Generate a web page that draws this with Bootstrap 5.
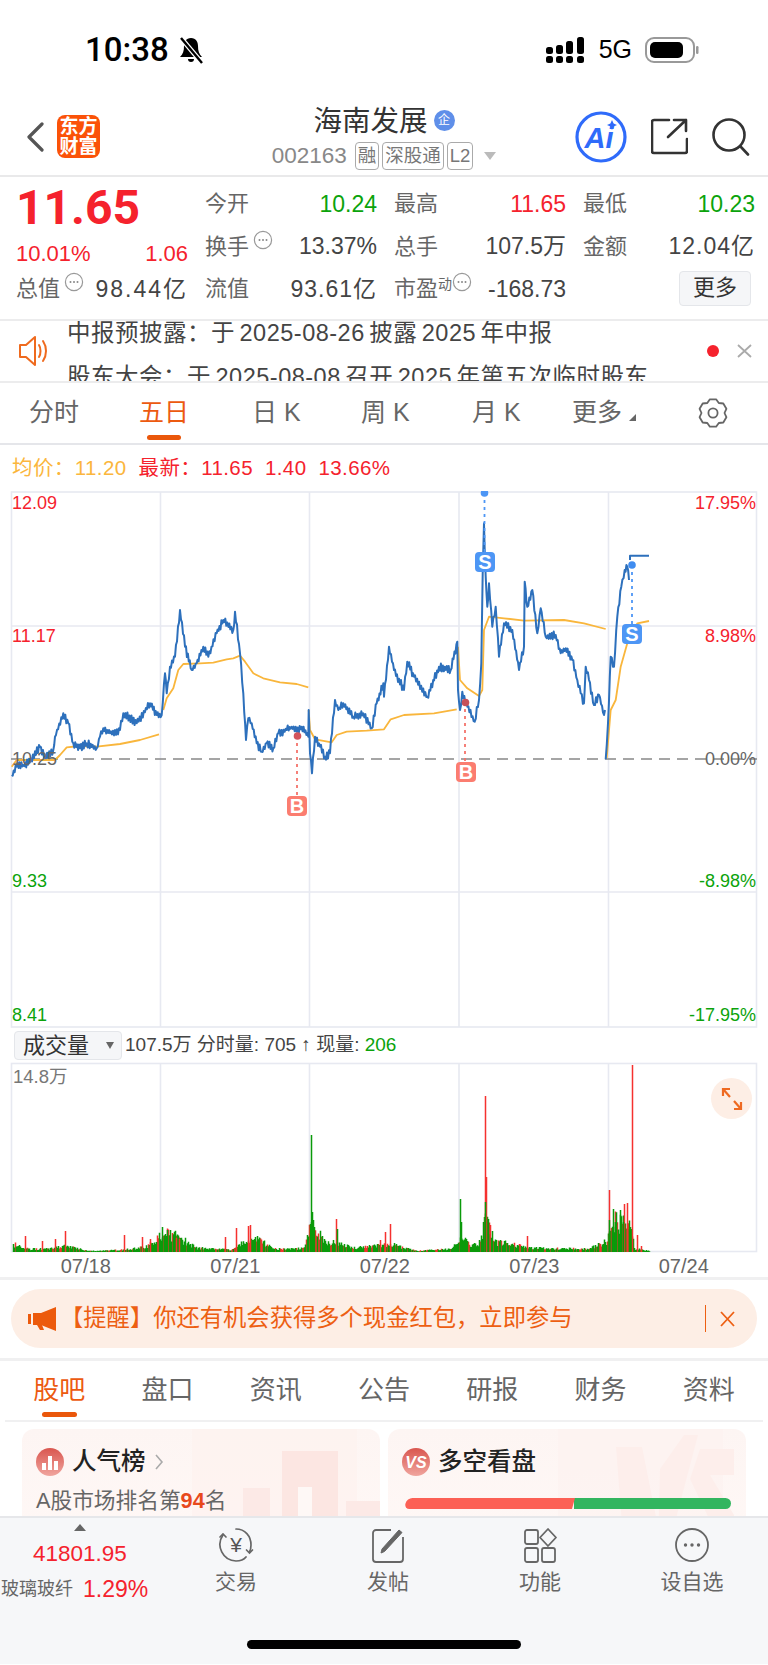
<!DOCTYPE html>
<html lang="zh">
<head>
    <meta charset="UTF-8">
    <title>海南发展 002163</title>
    <link href="https://cdn.jsdelivr.net/npm/bootstrap@5.3.0/dist/css/bootstrap.min.css" rel="stylesheet">
    <style>
        body {
            font-family: "Liberation Sans", "Noto Sans CJK SC", sans-serif;
            background: #fff;
            color: #444;
            margin: 0;
        }
        .phone { width: 768px; height: 1665px; overflow: hidden; }
        .up { color: #f5222d; }
        .down { color: #0ba30b; }
        .muted { color: #666; }

        /* status bar */
        .status-bar { height: 100px; padding: 0 68px 0 85px; color: #000; }
        .clock { font-family: Roboto, "Liberation Sans", sans-serif; font-size: 33px; font-weight: 500; margin-right: 9px; }
        .net { font-size: 25px; margin: 0 13px; }

        /* stock header */
        .stock-head { height: 77px; border-bottom: 2px solid #e9e9ea; padding: 0 18px 2px; }
        .head-side { flex: 1 1 0; }
        .back-arrow { margin-left: 8px; }
        .logo-box {
            width: 43px; height: 43px; border-radius: 8px; background: #fb5208; color: #fff;
            font-size: 19px; line-height: 20px; font-weight: 700; text-align: center; margin-left: 13px; padding-top: 2px;
        }
        .stock-name { font-size: 28.5px; line-height: 34px; color: #333; }
        .corp-mark {
            width: 21px; height: 21px; border-radius: 50%; background: #5f8fe9; color: #fff;
            font-size: 12px; line-height: 21px; text-align: center; margin-left: 6px;
        }
        .stock-code { font-size: 22.5px; color: #888; line-height: 28px; margin-right: 8px; }
        .code-tag {
            border: 1px solid #aaa; border-radius: 4px; font-size: 18.5px; line-height: 26px; color: #777;
            padding: 0 2px; margin-right: 3px;
        }
        .tri-down { width: 0; height: 0; border: 6px solid transparent; border-top: 8px solid #bbb; border-bottom: 0; margin-left: 8px; }

        /* quote block */
        .quote-grid {
            display: grid; grid-template-columns: repeat(4, 172px); column-gap: 17px; grid-auto-rows: 42.5px;
            height: 144px; padding: 5.5px 0 0 16px; font-size: 23px; border-bottom: 2px solid #ececed;
        }
        .quote-grid .muted { font-size: 22px; }
        .price { font-family: Roboto, "Liberation Sans", sans-serif; font-size: 48px; font-weight: 700; line-height: 43px; margin-top: 3px; }
        .low-cell { padding-top: 14px; font-size: 22px; }
        .val-wide { letter-spacing: 1px; }
        .val-wider { letter-spacing: 2px; }
        .more-btn {
            width: 72px; height: 35px; margin: 3px 4px 0 0; font-size: 22px; line-height: 32px; padding: 0; color: #333;
            background: #f5f6f8; border: 1px solid #e4e6ea; border-radius: 4px;
        }

        /* scrolling notice */
        .notice { height: 62px; overflow: hidden; border-bottom: 2px solid #ececed; padding: 0 16px 0 18px; }
        .notice-text { font-size: 23.5px; line-height: 44px; letter-spacing: .5px; word-spacing: -2.5px; color: #444; margin: -10px 0 0 19px; white-space: nowrap; }
        .red-dot { width: 12px; height: 12px; border-radius: 50%; background: #f5222d; margin-right: 18px; }

        /* chart tabs */
        .chart-tabs {
            display: grid; grid-template-columns: 110px 113px 109px 111px 100px 126px auto; align-items: center;
            height: 62px; padding-left: 29px; border-bottom: 2px solid #e5e6ea; font-size: 25px; color: #666;
        }
        .tab-on { color: #ec5a10; position: relative; }
        .chart-tabs .tab-on { width: 50px; }
        .tab-on::after {
            content: ""; position: absolute; left: 8px; right: 8px; bottom: -8px; height: 5px;
            border-radius: 3px; background: #ea570b;
        }
        .corner-tri { display: inline-block; width: 0; height: 0; border-left: 7px solid transparent; border-bottom: 7px solid #666; margin-left: 7px; }

        .avg-line { height: 46px; padding-left: 12px; font-size: 20.5px; letter-spacing: .4px; color: #f5222d; white-space: nowrap; }
        .avg-line > span { margin-right: 12px; }
        .avg-tone { color: #fbb63d; }
        svg { display: block; }
        .chart-svg text { font-family: "Liberation Sans", "Noto Sans CJK SC", sans-serif; }

        /* volume */
        .vol-bar { height: 33px; padding-left: 14px; font-size: 19px; color: #444; white-space: nowrap; }
        .vol-pick {
            width: 108px; height: 29px; background: #f5f6f8; border: 1px solid #e4e6ea; border-radius: 4px;
            font-size: 22px; line-height: 27px; padding-left: 8px; margin-right: 3px; color: #333;
        }
        .vol-tri { width: 0; height: 0; border: 4px solid transparent; border-top: 7px solid #666; border-bottom: 0; margin: 0 7px 0 auto; }
        .vol-box { height: 192px; }
        .expand-btn {
            position: absolute; right: 16px; top: 16px; width: 41px; height: 41px; border-radius: 50%; background: #fdeee5;
        }
        .date-row { height: 26px; padding-left: 11px; font-size: 20px; color: #666; border-bottom: 3px solid #f0f0f1; }
        .date-row span { width: 149.5px; text-align: center; }

        /* promo */
        .promo-wrap { padding: 9px 11px 0; border-bottom: 3px solid #f0f0f1; box-sizing: content-box; height: 69px; }
        .promo {
            height: 59px; border-radius: 30px; background: #fdeee5; color: #ed5f12; font-size: 23.300px;
            padding: 0 22px 0 17px; white-space: nowrap;
        }
        .promo-rule { width: 1px; height: 27px; background: #ed5f12; margin: 0 14px 0 auto; }

        /* lower tabs */
        .info-tabs { height: 61px; margin: 0 5px; border-bottom: 2px solid #f0f0f1; font-size: 26px; color: #666; }
        .info-tabs > div { flex: 1 1 0; text-align: center; line-height: 58px; }
        .info-tabs .tab-on::after { left: 37px; right: 36px; bottom: 3px; }

        .panel-row { height: 94px; padding: 7px 22px 0; overflow: hidden; gap: 8px; }
        .panel {
            width: 358px; height: 120px; border-radius: 12px 12px 0 0; overflow: hidden; position: relative;
            background: linear-gradient(#fdf5f3, #fff8f6);
        }
        .panel-mark { position: absolute; left: 0; top: 0; }
        .panel-body { position: relative; padding: 19px 14px 0; }
        .panel-title { font-size: 24.5px; line-height: 28px; font-weight: 500; color: #222; margin-left: 8px; }
        .rank-text { font-size: 21.700px; color: #666; line-height: 30px; margin-top: 10px; white-space: nowrap; }
        .rank-text b { color: #e8491c; }
        .split-bar { height: 11px; margin: 22px 1px 0 2px; position: relative; }
        .split-red { width: 168px; background: #fc6055; border-radius: 6px 0 0 6px; transform: skewX(-15deg); transform-origin: bottom left; }
        .split-green { background: #33b55f; border-radius: 0 6px 6px 0; margin-left: 2px; flex: 1; }

        /* bottom bar */
        .foot-bar { height: 148px; background: #f6f7f9; border-top: 2px solid #e6e7ea; position: relative; }
        .index-cell { width: 160px; white-space: nowrap; }
        .index-tri { width: 0; height: 0; margin: 6px 0 0 74px; border: 6px solid transparent; border-bottom: 7px solid #666; border-top: 0; }
        .index-num { font-size: 22.5px; line-height: 24px; margin: 11px 0 0 33px; }
        .index-sub { margin-top: 6px; padding-left: 1px; }
        .index-name { font-size: 18px; color: #666; margin-right: 10px; }
        .index-pct { font-size: 23px; }
        .foot-cell { width: 152px; color: #666; font-size: 21px; line-height: 28px; padding-top: 9px; }
        .foot-cell svg { margin-bottom: 5px; }
        .home-pill {
            position: absolute; left: 247px; bottom: 15px; width: 274px; height: 9px; border-radius: 5px; background: #000;
        }
    </style>
</head>
<body>
<div class="phone d-flex flex-column">

    <div class="status-bar d-flex align-items-center flex-shrink-0">
        <span class="clock">10:38</span>
        <svg width="26" height="30" viewBox="0 0 26 30">
            <path d="M13 3c-5 0-7 4-7 8 0 5-1 8-4 11h22c-3-3-4-6-4-11 0-4-2-8-7-8z" fill="#000"/>
            <path d="M10 24h6a3 3 0 0 1-6 0z" fill="#000"/>
            <path d="M3 3l21 25" stroke="#fff" stroke-width="5"/>
            <path d="M3 3l21 25" stroke="#000" stroke-width="2.4"/>
        </svg>
        <span class="ms-auto d-flex align-items-center">
            <svg width="41" height="28" viewBox="0 0 41 28" fill="#000">
                <rect x="1" y="11" width="7" height="7" rx="2.5"/><rect x="1" y="20" width="7" height="7" rx="2.5"/>
                <rect x="11" y="9" width="7" height="9" rx="2.5"/><rect x="11" y="20" width="7" height="7" rx="2.5"/>
                <rect x="21" y="5" width="7" height="13" rx="2.5"/><rect x="21" y="20" width="7" height="7" rx="2.5"/>
                <rect x="32" y="1" width="7" height="17" rx="2.5"/><rect x="32" y="20" width="7" height="7" rx="2.5"/>
            </svg>
            <span class="net">5G</span>
            <svg width="55" height="28" viewBox="0 0 55 28">
                <rect x="1" y="2" width="48" height="24" rx="8" fill="none" stroke="#999" stroke-width="2"/>
                <rect x="5" y="6" width="33" height="16" rx="5" fill="#000"/>
                <rect x="51" y="10" width="2.5" height="8" rx="1.2" fill="#999"/>
            </svg>
        </span>
    </div>

    <div class="stock-head d-flex align-items-center flex-shrink-0">
        <div class="head-side d-flex align-items-center">
            <svg class="back-arrow" width="18" height="30" viewBox="0 0 18 30"><path d="M16 2L3 15l13 13" fill="none" stroke="#555" stroke-width="3.2" stroke-linecap="round" stroke-linejoin="round"/></svg>
            <div class="logo-box">东方<br>财富</div>
        </div>
        <div class="text-center">
            <div class="d-flex align-items-center justify-content-center"><span class="stock-name">海南发展</span><span class="corp-mark">企</span></div>
            <div class="d-flex align-items-center justify-content-center mt-1">
                <span class="stock-code">002163</span><span class="code-tag">融</span><span class="code-tag">深股通</span><span class="code-tag">L2</span><span class="tri-down"></span>
            </div>
        </div>
        <div class="head-side d-flex align-items-center justify-content-end">
            <svg class="chart-svg" width="52" height="52" viewBox="0 0 52 52">
                <circle cx="26" cy="26" r="24" fill="none" stroke="#2f6bfa" stroke-width="3.2"/>
                <text x="24" y="37" text-anchor="middle" font-size="29" font-weight="700" font-style="italic" fill="#2f6bfa">Ai</text>
                <path d="M37 9l1.6 3.4L42 14l-3.4 1.6L37 19l-1.6-3.4L32 14l3.4-1.6z" fill="#2f6bfa"/>
            </svg>
            <svg class="ms-4" width="37" height="37" viewBox="0 0 37 37" fill="none" stroke="#333" stroke-width="2.6" stroke-linecap="round" stroke-linejoin="round">
                <path d="M18 2H3a2 2 0 0 0-2 2v29a2 2 0 0 0 2 2h31a2 2 0 0 0 2-2V21"/>
                <path d="M17 19L35 2M23 2h12v11"/>
            </svg>
            <svg class="ms-4" width="38" height="38" viewBox="0 0 38 38" fill="none" stroke="#333" stroke-width="2.6" stroke-linecap="round">
                <circle cx="17" cy="17" r="15.5"/><path d="M28.5 28.5L36 36.5"/>
            </svg>
        </div>
    </div>

    <svg width="0" height="0" class="position-absolute">
        <symbol id="dots" viewBox="0 0 20 20">
            <circle cx="10" cy="10" r="8.6" fill="none" stroke="#999" stroke-width="1.2"/>
            <circle cx="6.5" cy="10" r="1" fill="#888"/><circle cx="10" cy="10" r="1" fill="#888"/><circle cx="13.5" cy="10" r="1" fill="#888"/>
        </symbol>
    </svg>

    <div class="quote-grid flex-shrink-0">
        <div class="price up">11.65</div>
        <div class="d-flex justify-content-between align-items-center"><span class="muted">今开</span><span class="down">10.24</span></div>
        <div class="d-flex justify-content-between align-items-center"><span class="muted">最高</span><span class="up">11.65</span></div>
        <div class="d-flex justify-content-between align-items-center"><span class="muted">最低</span><span class="down">10.23</span></div>

        <div class="d-flex justify-content-between align-items-center low-cell up"><span>10.01%</span><span>1.06</span></div>
        <div class="d-flex justify-content-between align-items-center"><span class="muted">换手<svg class="d-inline-block align-top ms-1" width="20" height="20"><use href="#dots"/></svg></span><span>13.37%</span></div>
        <div class="d-flex justify-content-between align-items-center"><span class="muted">总手</span><span>107.5万</span></div>
        <div class="d-flex justify-content-between align-items-center"><span class="muted">金额</span><span class="val-wide">12.04亿</span></div>

        <div class="d-flex justify-content-between align-items-center"><span class="muted">总值<svg class="d-inline-block align-top ms-1" width="20" height="20"><use href="#dots"/></svg></span><span class="val-wider">98.44亿</span></div>
        <div class="d-flex justify-content-between align-items-center"><span class="muted">流值</span><span class="val-wide">93.61亿</span></div>
        <div class="d-flex justify-content-between align-items-center"><span class="muted text-nowrap">市盈<sup style="font-size:14px">动</sup><svg class="d-inline-block align-top" width="20" height="20"><use href="#dots"/></svg></span><span>-168.73</span></div>
        <div class="d-flex justify-content-end align-items-start"><button class="btn more-btn">更多</button></div>
    </div>

    <div class="notice d-flex align-items-center flex-shrink-0">
        <svg class="flex-shrink-0" width="30" height="34" viewBox="0 0 30 34" fill="none" stroke="#ef6a1e" stroke-width="2" stroke-linejoin="round" stroke-linecap="round">
            <path d="M2 11h6l9-8v28l-9-8H2z"/><path d="M21 11c2 3 2 9 0 12M25 7c4 6 4 14 0 20"/>
        </svg>
        <div class="notice-text flex-grow-1 align-self-start">
            <div>中报预披露：于 2025-08-26 披露 2025 年中报</div>
            <div>股东大会：于 2025-08-08 召开 2025 年第五次临时股东</div>
        </div>
        <span class="red-dot flex-shrink-0"></span>
        <svg class="flex-shrink-0" width="15" height="14" viewBox="0 0 15 14"><path d="M1 1l13 12M14 1L1 13" stroke="#aaa" stroke-width="1.800"/></svg>
    </div>

    <div class="chart-tabs flex-shrink-0">
        <span>分时</span>
        <span class="tab-on">五日</span>
        <span>日 K</span>
        <span>周 K</span>
        <span>月 K</span>
        <span>更多<i class="corner-tri"></i></span>
        <svg id="gear" width="30" height="30" viewBox="0 0 30 30" fill="none" stroke="#666" stroke-width="1.8" stroke-linejoin="round"><path id="gearPath"/><circle cx="15" cy="15" r="4.6"/></svg>
    </div>

    <div class="avg-line d-flex align-items-center flex-shrink-0">
        <span class="avg-tone">均价：11.20</span>
        <span>最新：11.65</span>
        <span>1.40</span>
        <span>13.66%</span>
    </div>

    <svg id="priceChart" class="chart-svg flex-shrink-0" width="768" height="538" viewBox="0 491 768 538">
        <g fill="none" stroke="#e7e9f1" stroke-width="1.6">
            <rect x="11.5" y="492" width="745" height="535"/>
            <path d="M160.5 492V1027M309.5 492V1027M459 492V1027M608.5 492V1027M11 626H757M11 892H757"/>
        </g>
        <path d="M11 759H757" stroke="#888" stroke-width="1.6" stroke-dasharray="11 7"/>
        <g id="priceLines"></g>
        <g font-size="18">
            <text x="12" y="509" fill="#f5222d">12.09</text>
            <text x="12" y="642" fill="#f5222d">11.17</text>
            <text x="12" y="765" fill="#666">10.25</text>
            <text x="12" y="887" fill="#0ba30b">9.33</text>
            <text x="12" y="1021" fill="#0ba30b">8.41</text>
            <text x="756" y="509" text-anchor="end" fill="#f5222d">17.95%</text>
            <text x="756" y="642" text-anchor="end" fill="#f5222d">8.98%</text>
            <text x="756" y="765" text-anchor="end" fill="#666">0.00%</text>
            <text x="756" y="887" text-anchor="end" fill="#0ba30b">-8.98%</text>
            <text x="756" y="1021" text-anchor="end" fill="#0ba30b">-17.95%</text>
        </g>
        <g stroke-width="1.8" stroke-dasharray="3 4" fill="none">
            <path d="M297 736V796M465 702V762" stroke="#f4736b"/>
            <path d="M484.500 493V552M632 565V624" stroke="#4d96f5"/>
        </g>
        <circle cx="297.500" cy="736" r="3.800" fill="#d2545c"/>
        <circle cx="465.500" cy="702.500" r="3.800" fill="#c6505a"/>
        <circle cx="484.500" cy="493" r="3.800" fill="#4d96f5"/>
        <circle cx="632" cy="565" r="3.800" fill="#3f8cf0"/>
        <g font-size="20" font-weight="700" text-anchor="middle" fill="#fff">
            <rect x="287" y="796" width="20" height="20" rx="4" fill="#fb7d70"/><text x="297" y="813">B</text>
            <rect x="456" y="762" width="20" height="20" rx="4" fill="#fb7d70"/><text x="466" y="779">B</text>
            <rect x="475" y="552" width="20" height="20" rx="4" fill="#4d96f5"/><text x="485" y="569">S</text>
            <rect x="622" y="624" width="20" height="20" rx="4" fill="#4d96f5"/><text x="632" y="641">S</text>
        </g>
    </svg>

    <div class="vol-bar d-flex align-items-center flex-shrink-0">
        <div class="vol-pick d-flex align-items-center">成交量<i class="vol-tri"></i></div>
        <span>107.5万 分时量: 705 ↑ 现量:&nbsp;<span class="down">206</span></span>
    </div>

    <div class="vol-box position-relative flex-shrink-0">
        <svg id="volChart" class="chart-svg" width="768" height="192" viewBox="0 1062 768 192">
            <g fill="none" stroke="#e7e9f1" stroke-width="1.6">
                <rect x="11.5" y="1063.500" width="745" height="188"/>
                <path d="M160.500 1064V1252M309.500 1064V1252M459 1064V1252M608.500 1064V1252"/>
            </g>
            <g id="volBars" stroke-width="1.500"></g>
            <text x="13" y="1083" font-size="18.500" fill="#777">14.8万</text>
        </svg>
        <div class="expand-btn d-flex align-items-center justify-content-center">
            <svg width="22" height="24" viewBox="0 0 22 24" fill="none" stroke="#ee6a22" stroke-width="2.200">
                <path d="M2 9V2h7M2 2l7 8M20 15v7h-7M20 22l-7-8"/>
            </svg>
        </div>
    </div>

    <div class="date-row d-flex align-items-center flex-shrink-0">
        <span>07/18</span><span>07/21</span><span>07/22</span><span>07/23</span><span>07/24</span>
    </div>

    <div class="promo-wrap flex-shrink-0">
        <div class="promo d-flex align-items-center">
            <svg width="28" height="26" viewBox="0 0 28 26" fill="#ec5a0c" class="me-1 flex-shrink-0">
                <rect x="0" y="8" width="3" height="10"/><path d="M5 7h8L28 1v24L13 19H5z"/><path d="M9 19h5l2 5h-4z" fill="#ec5a0c"/>
            </svg>
            <span>【提醒】你还有机会获得多个现金红包，立即参与</span>
            <span class="promo-rule"></span>
            <svg class="flex-shrink-0" width="15" height="16" viewBox="0 0 15 16"><path d="M1 1l13 14M14 1L1 15" stroke="#ed5f12" stroke-width="1.800"/></svg>
        </div>
    </div>

    <div class="info-tabs d-flex flex-shrink-0">
        <div class="tab-on">股吧</div><div>盘口</div><div>资讯</div><div>公告</div><div>研报</div><div>财务</div><div>资料</div>
    </div>

    <div class="panel-row d-flex flex-shrink-0">
        <div class="panel">
            <svg class="panel-mark" width="358" height="120" viewBox="0 0 358 120">
                <rect x="170" y="0" width="165" height="120" fill="#fdf0ed" opacity=".55"/>
                <rect x="221" y="59" width="27" height="61" fill="#fce9e6"/>
                <rect x="260" y="22" width="56" height="98" fill="#fce6e2"/>
                <path d="M276 58h14v62h-14z" fill="#fff" opacity=".7"/>
                <rect x="324" y="72" width="34" height="48" fill="#fce9e6"/>
            </svg>
            <div class="panel-body">
                <div class="d-flex align-items-center">
                    <svg width="28" height="28" viewBox="0 0 28 28">
                        <defs><linearGradient id="redBall" x1="0" y1="0" x2="0" y2="1"><stop offset="0" stop-color="#d9564f"/><stop offset="1" stop-color="#f0a59e"/></linearGradient></defs>
                        <circle cx="14" cy="14" r="14" fill="url(#redBall)"/>
                        <path d="M6 15h4v7H6zM12 8h4v14h-4zM18 13h4v9h-4z" fill="#fff"/>
                    </svg>
                    <span class="panel-title">人气榜</span>
                    <svg class="ms-2" width="10" height="18" viewBox="0 0 10 18"><path d="M2 2l6 7-6 7" fill="none" stroke="#aaa" stroke-width="1.600"/></svg>
                </div>
                <div class="rank-text">A股市场排名第<b>94</b>名</div>
            </div>
        </div>
        <div class="panel">
            <svg class="panel-mark" width="358" height="120" viewBox="0 0 358 120">
                <rect x="170" y="0" width="165" height="120" fill="#fdf0ed" opacity=".4"/>
                <path d="M228 18h26l14 70 -14 32h-18z" fill="#fdeeeb"/>
                <path d="M272 40l24-34h14l-30 114h-10z" fill="#fdeeeb"/>
                <path d="M312 20h34v26h-24l24 40v34h-40l8-24h10l-22-46z" fill="#fdeeeb"/>
            </svg>
            <div class="panel-body">
                <div class="d-flex align-items-center">
                    <svg class="chart-svg" width="28" height="28" viewBox="0 0 28 28">
                        <circle cx="14" cy="14" r="14" fill="url(#redBall)"/>
                        <text x="14" y="20" text-anchor="middle" font-size="16" font-weight="700" font-style="italic" fill="#fff">VS</text>
                    </svg>
                    <span class="panel-title">多空看盘</span>
                </div>
                <div class="split-bar d-flex">
                    <div class="split-red"></div><div class="split-green"></div>
                </div>
            </div>
        </div>
    </div>

    <div class="foot-bar d-flex flex-shrink-0">
        <div class="index-cell">
            <div class="index-tri"></div>
            <div class="index-num up">41801.95</div>
            <div class="index-sub d-flex align-items-center"><span class="index-name">玻璃玻纤</span><span class="index-pct up">1.29%</span></div>
        </div>
        <div class="foot-cell d-flex flex-column align-items-center">
            <svg class="chart-svg" width="38" height="36" viewBox="0 0 38 36" fill="none" stroke="#666" stroke-width="1.700" stroke-linecap="round">
                <path d="M6 8A16.500 16.500 0 0 0 19 34c4 0 8-1.500 10-4"/>
                <path d="M19 2c9 0 15 7 15 16 0 3-.5 5-1.500 7"/>
                <path d="M3 10l3-3 3 3M29.500 23l3 3 3-3"/>
                <text x="19" y="25" text-anchor="middle" font-size="21" stroke="none" fill="#555">¥</text>
            </svg>
            <span>交易</span>
        </div>
        <div class="foot-cell d-flex flex-column align-items-center">
            <svg width="34" height="36" viewBox="0 0 34 36" fill="none" stroke="#666" stroke-width="1.800" stroke-linejoin="round">
                <path d="M20 3H5a3 3 0 0 0-3 3v26a3 3 0 0 0 3 3h24a3 3 0 0 0 3-3V10"/>
                <path d="M11 22L28 3l3 2.500L13.500 24.500 10 26z" fill="#666" stroke-width="1"/>
            </svg>
            <span>发帖</span>
        </div>
        <div class="foot-cell d-flex flex-column align-items-center">
            <svg width="34" height="36" viewBox="0 0 34 36" fill="none" stroke="#666" stroke-width="1.800" stroke-linejoin="round">
                <rect x="2" y="3" width="13" height="14" rx="2"/><path d="M25 2l8 8.500-8 8.500-8-8.500z"/>
                <rect x="2" y="21" width="13" height="14" rx="2"/><rect x="19" y="21" width="13" height="14" rx="2"/>
            </svg>
            <span>功能</span>
        </div>
        <div class="foot-cell d-flex flex-column align-items-center">
            <svg width="36" height="36" viewBox="0 0 36 36">
                <circle cx="18" cy="18" r="16" fill="none" stroke="#666" stroke-width="1.800"/>
                <circle cx="11.500" cy="18" r="1.700" fill="#666"/><circle cx="18" cy="18" r="1.700" fill="#666"/><circle cx="24.500" cy="18" r="1.700" fill="#666"/>
            </svg>
            <span>设自选</span>
        </div>
        <div class="home-pill"></div>
    </div>
</div>

<script src="https://cdn.jsdelivr.net/npm/bootstrap@5.3.0/dist/js/bootstrap.bundle.min.js"></script>
<script>
    // repeatable noise so the lines come out the same each load
    let seed = 20250723;
    function rnd() {
        seed = (seed * 1664525 + 1013904223) % 4294967296;
        return seed / 4294967296;
    }

    // traced from the screenshot at 3x, left half then right half
    const toL = p => [p[0] / 3, 390 + p[1] / 3];
    const toR = p => [384 + p[0] / 3, 390 + p[1] / 3];

    const blue = [
        ...[[35,1155],[50,1130],[70,1125],[90,1115],[120,1070],[135,1100],[160,1080],[165,1040],[190,970],[205,1000],[220,1060],[240,1075],[260,1060],[290,1075],[300,1040],[310,1015],[330,1030],[360,1020],[370,970],[410,1000],[450,940],[470,975],[485,975],[495,850],[500,910],[510,830],[525,800],[540,660],[555,770],[575,840],[590,820],[610,770],[625,800],[650,730],[670,690],[700,720],[705,665],[720,790],[730,910],[738,1050],[745,985],[755,1000],[770,1060],[785,1085],[800,1060],[820,1075],[835,1030],[860,1020],[875,1010],[890,1025],[905,1010],[925,1040],[926,960],[930,1090],[936,1150],[945,1040],[960,1070],[975,1100],[990,1090],[1005,930],[1015,960],[1030,940],[1060,980],[1090,970],[1115,1015],[1130,940],[1150,880]].map(toL),
        ...[[0,920],[15,770],[30,840],[60,900],[70,815],[90,860],[130,920],[165,830],[200,840],[220,755],[222,900],[228,960],[235,905],[250,950],[272,995],[285,930],[292,820],[296,550],[300,400],[302,480],[305,560],[310,650],[315,580],[325,710],[335,650],[345,800],[360,700],[385,720],[405,840],[420,770],[422,575],[430,650],[445,600],[460,730],[470,655],[485,740],[515,735],[530,790],[545,775],[565,810],[580,870],[590,910],[600,940],[605,830],[615,870],[630,945],[645,915],[660,975],[663,960]].map(toR)
    ];
    const blueEnd = [[665,1108],[672,1000],[680,800],[690,830],[700,680],[712,590],[722,540],[730,530],[735,570]].map(toR);
    const blueFlat = [[738,510],[738,497],[795,497]].map(toR);

    const yellow = [
        [[35,1130],[50,1110],[100,1110],[165,1110],[180,1095],[200,1072],[240,1068],[290,1070],[360,1062],[420,1050],[477,1033]].map(toL),
        [[490,960],[500,925],[520,895],[535,840],[550,822],[600,820],[640,818],[680,808],[700,805],[720,797],[735,815],[760,850],[790,865],[840,877],[890,882],[925,892]].map(toL),
        [[926,960],[930,1020],[945,1048],[995,1057],[1010,1035],[1040,1025],[1100,1022],[1152,1018]].map(toL).concat([[20,988],[60,975],[150,970],[218,958]].map(toR)),
        [[222,770],[228,870],[250,895],[285,918],[295,900],[300,720],[315,680],[360,685],[420,692],[540,690],[600,700],[665,717]].map(toR),
        [[668,1105],[680,960],[695,930],[710,830],[730,760],[760,700],[795,693]].map(toR)
    ];

    // price ticks: saw-tooth wobble laid over the traced outline
    function rough(pts, amt) {
        const out = [];
        let flip = 1;
        for (let i = 0; i < pts.length - 1; i++) {
            const a = pts[i], b = pts[i + 1];
            const n = Math.max(1, Math.round(Math.abs(b[0] - a[0])));
            for (let k = 0; k < n; k++) {
                const t = k / n;
                flip = -flip;
                out.push([a[0] + (b[0] - a[0]) * t, a[1] + (b[1] - a[1]) * t + (k ? flip * (1 + rnd() * amt) : 0)]);
            }
        }
        out.push(pts[pts.length - 1]);
        return out;
    }
    const d = pts => 'M' + pts.map(p => p[0].toFixed(1) + ' ' + p[1].toFixed(1)).join('L');

    let lines = '';
    yellow.forEach(seg => {
        lines += `<path d="${d(seg)}" fill="none" stroke="#f9b63c" stroke-width="1.8" stroke-linejoin="round"/>`;
    });
    [rough(blue, 3), rough(blueEnd, 2.5), blueFlat].forEach(seg => {
        lines += `<path d="${d(seg)}" fill="none" stroke="#2d70bc" stroke-width="2" stroke-linejoin="round"/>`;
    });
    document.getElementById('priceLines').innerHTML = lines;

    // volume bars: [zoom x, height] envelope, then the tall spikes
    const env = [[25,8],[50,3],[100,3],[130,6],[180,1],[250,2],[300,5],[330,18],[360,15],[400,4],[470,2],[490,8],[525,12],[560,3],[620,4],[635,30],[660,10],[690,8],[720,4],[800,7],[850,1],[920,3],[935,12],[950,10],[975,5],[990,30],[1010,10],[1080,4],[1200,3],[1235,10],[1250,30],[1285,25],[1295,3],[1325,1]];
    function envAt(x) {
        for (let i = 0; i < env.length - 1; i++) {
            if (x >= env[i][0] && x <= env[i + 1][0]) {
                const t = (x - env[i][0]) / (env[i + 1][0] - env[i][0]);
                return env[i][1] + (env[i + 1][1] - env[i][1]) * t;
            }
        }
        return 0;
    }
    const base = 1252;
    let red = '', green = '';
    for (let x = 12; x < 650; x++) {
        const h = envAt(x * 2.04) * (.6 + rnd() * .8);
        if (h < .3) continue;
        const seg = `M${x + .5} ${base}V${(base - h).toFixed(1)}`;
        if (rnd() < .25) red += seg; else green += seg;
    }
    const redSpikes = [[25,16],[42,11],[55,13],[65,21],[124,17],[142,15],[150,13],[176,14],[179,13],[225,15],[236,24],[248,26],[250,27],[336,33],[380,12],[385,20],[390,28],[485,156],[486,75],[527,16],[609,62],[624,48],[627,49],[632,187],[637,17],[641,6]];
    const greenSpikes = [[162,25],[167,22],[257,16],[311,117],[313,32],[337,23],[460,53],[461,30],[485,50],[488,33],[609,32],[613,43],[615,30],[620,42],[630,25],[623,30]];
    let marks = `<path d="${red}" stroke="#f5312f"/><path d="${green}" stroke="#0a9a0a"/>`;
    let tall = '';
    redSpikes.forEach(s => { tall += `M${s[0] + .5} ${base}V${base - s[1]}`; });
    marks += `<path d="${tall}" stroke="#f5312f"/>`;
    tall = '';
    greenSpikes.forEach(s => { tall += `M${s[0] + .5} ${base}V${base - s[1]}`; });
    marks += `<path d="${tall}" stroke="#0a9a0a"/>`;
    document.getElementById('volBars').innerHTML = marks;

    // settings gear, six soft lobes
    let g = '';
    for (let i = 0; i < 6; i++) {
        const a = (i * 60 - 90) * Math.PI / 180, w = .22, v = a + Math.PI / 6;
        const pt = (ang, r) => (15 + r * Math.cos(ang)).toFixed(1) + ' ' + (15 + r * Math.sin(ang)).toFixed(1);
        g += (i ? 'L' : 'M') + pt(a - w, 14) + 'L' + pt(a + w, 14) + 'L' + pt(v, 11.5);
    }
    document.getElementById('gearPath').setAttribute('d', g + 'Z');
</script>
</body>
</html>
